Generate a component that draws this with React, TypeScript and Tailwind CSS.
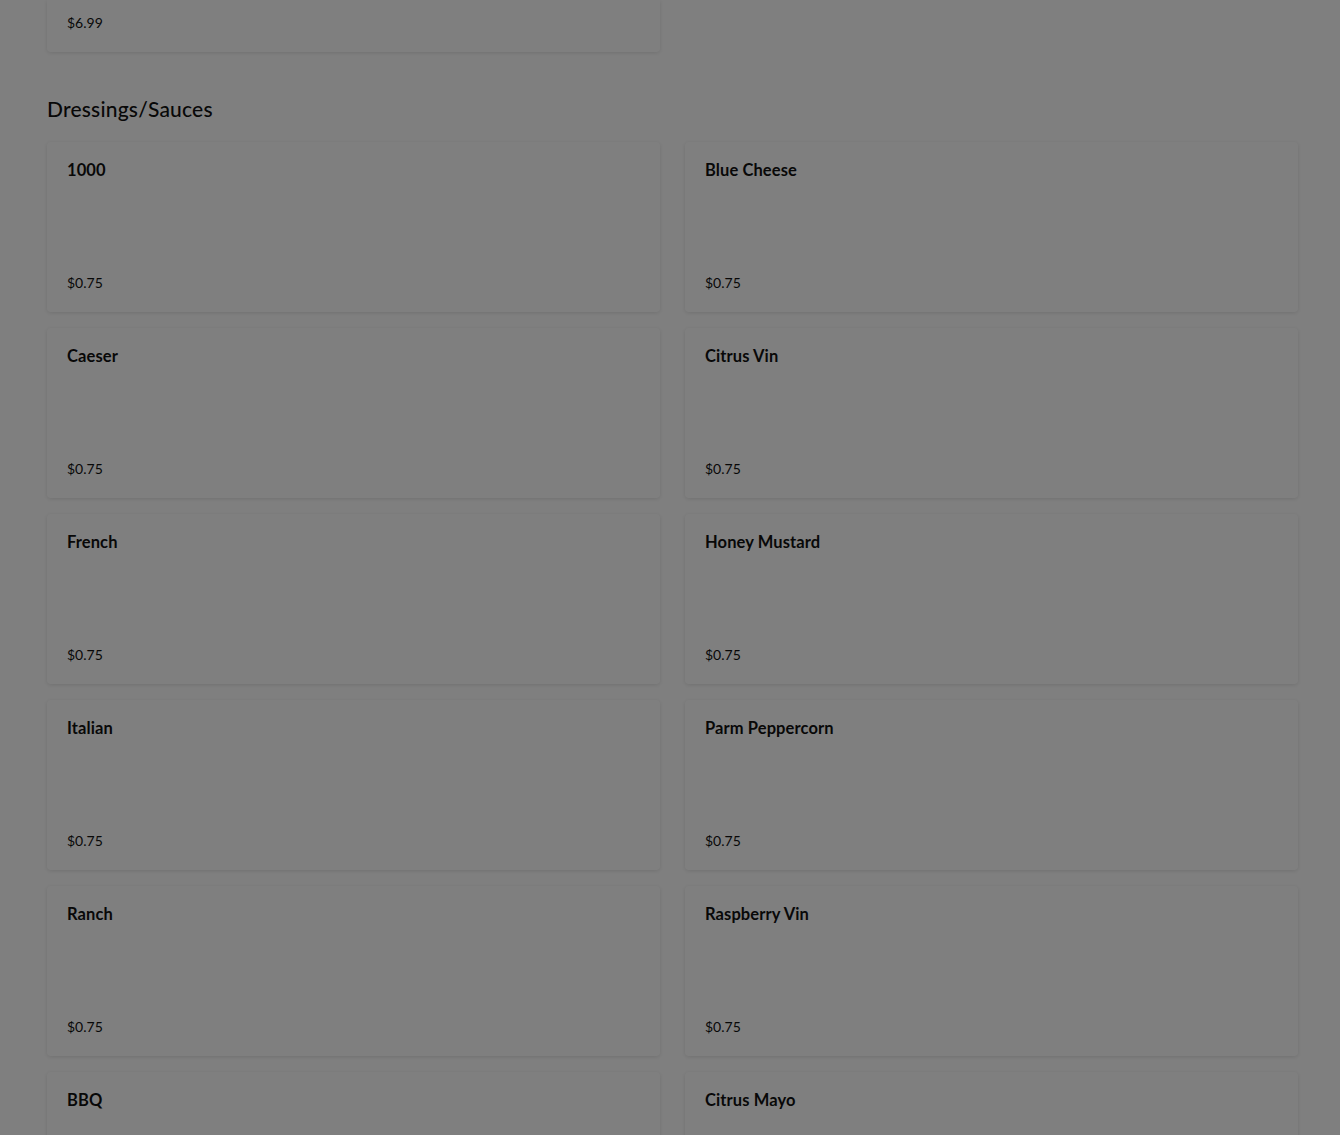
import React from "react";

const items: [string, string][] = [
  ["1000", "Blue Cheese"],
  ["Caeser", "Citrus Vin"],
  ["French", "Honey Mustard"],
  ["Italian", "Parm Peppercorn"],
  ["Ranch", "Raspberry Vin"],
];

function Card({ title, price }: { title: string; price?: string }) {
  return (
    <div className="h-[170px] rounded-[4px] bg-white shadow-[0_1px_4px_rgba(0,0,0,0.12)] flex flex-col justify-between px-[20px] pt-[17px] pb-[19px]">
      <div className="text-[16.5px] leading-[22px] font-bold tracking-[0.1px] text-[#111]">{title}</div>
      {price ? <div className="text-[14px] leading-[20px] text-[#111]">{price}</div> : null}
    </div>
  );
}

export default function App() {
  return (
    <div className="relative h-[1135px] overflow-hidden bg-white" style={{ fontFamily: "Lato, 'Noto Sans', sans-serif" }}>
      <div className="ml-[47px] w-[1251px]">
        <div className="grid grid-cols-2 gap-x-[25px]">
          <div className="h-[52px] rounded-b-[4px] bg-white shadow-[0_1px_4px_rgba(0,0,0,0.12)] flex flex-col justify-end px-[20px] pb-[19px]">
            <div className="text-[14px] leading-[20px] text-[#111]">$6.99</div>
          </div>
        </div>
        <h2 className="mt-[43px] mb-[19px] text-[21px] leading-[28px] font-medium text-[#111] tracking-[0.2px]">Dressings/Sauces</h2>
        <div className="grid grid-cols-2 gap-x-[25px] gap-y-[16px]">
          {items.flatMap(([a, b]) => [
            <Card key={a} title={a} price="$0.75" />,
            <Card key={b} title={b} price="$0.75" />,
          ])}
          <Card title="BBQ" />
          <Card title="Citrus Mayo" />
        </div>
      </div>
      <div className="fixed inset-0 bg-black/50" />
    </div>
  );
}
